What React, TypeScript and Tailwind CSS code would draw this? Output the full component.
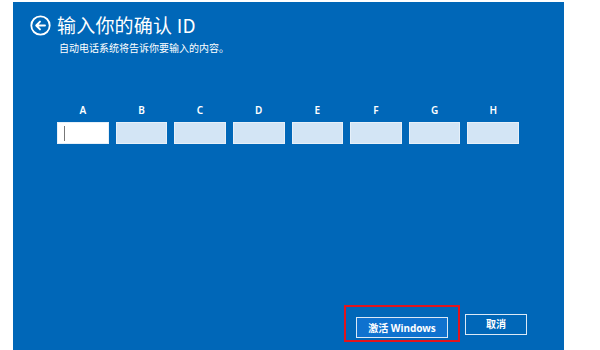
import React from 'react';

const slots = ['A', 'B', 'C', 'D', 'E', 'F', 'G', 'H'];

function BackIcon() {
  return (
    <svg width="21" height="21" viewBox="0 0 21 21" fill="none">
      <circle cx="10.5" cy="10.5" r="9.2" stroke="white" strokeWidth="1.8" />
      <path d="M15 10.5H6.5M10 6.6L6.2 10.5L10 14.4" stroke="white" strokeWidth="1.9" strokeLinecap="round" strokeLinejoin="round" />
    </svg>
  );
}

export default function App() {
  return (
    <div className="w-[600px] h-[350px] bg-white pl-[13px] pt-[2px] overflow-hidden" style={{ fontFamily: '"Noto Sans", "Noto Sans CJK SC", sans-serif' }}>
      <div className="relative w-[551px] h-[348px] bg-[#0067b8] flex flex-col pl-[17px] pt-[11px] text-white">
        {/* Header */}
        <div className="flex items-center gap-[6px]">
          <BackIcon />
          <h1 className="text-[19px] leading-[24px] font-normal tracking-[0.2px]" style={{ fontFamily: '"Noto Sans CJK SC", "Noto Sans", sans-serif' }}>
            输入你的确认 ID
          </h1>
        </div>
        <p className="ml-[29px] mt-[5px] text-[10px] leading-[12px]" style={{ fontFamily: '"Noto Sans CJK SC", sans-serif' }}>
          自动电话系统将告诉你要输入的内容。
        </p>

        {/* Code boxes */}
        <div className="ml-[27px] mt-[50px] w-[462px] grid grid-cols-8 gap-x-[7px]">
          {slots.map((s, i) => (
            <div key={s} className="flex flex-col items-center">
              <span className="text-[10px] leading-[12px] font-semibold">{s}</span>
              <div
                className={
                  'mt-[6px] w-full h-[22px] border border-[#e6f0f9] ' +
                  (i === 0 ? 'bg-white flex items-center pl-[6px]' : 'bg-[#d3e5f5]')
                }
              >
                {i === 0 && <div className="w-px h-[15px] bg-[#777]" />}
              </div>
            </div>
          ))}
        </div>

        {/* Buttons */}
        <div className="mt-auto mb-[12px] mr-[37px] flex justify-end gap-[17px]">
          <div className="relative">
            <button className="w-[92px] h-[21px] bg-[#0f72cf] border border-[#dbe9f6] text-[10px] font-bold leading-none" style={{ fontFamily: '"Noto Sans", "Noto Sans CJK SC", sans-serif' }}>
              激活 Windows
            </button>
            {/* annotation */}
            <div className="absolute -left-[12px] -top-[9px] w-[116px] h-[37px] border-2 border-[#e3141c] pointer-events-none" />
          </div>
          <button className="w-[62px] h-[21px] bg-[#0067b8] border border-[#dbe9f6] text-[10px] font-bold leading-none" style={{ fontFamily: '"Noto Sans CJK SC", sans-serif' }}>
            取消
          </button>
        </div>
      </div>
    </div>
  );
}
